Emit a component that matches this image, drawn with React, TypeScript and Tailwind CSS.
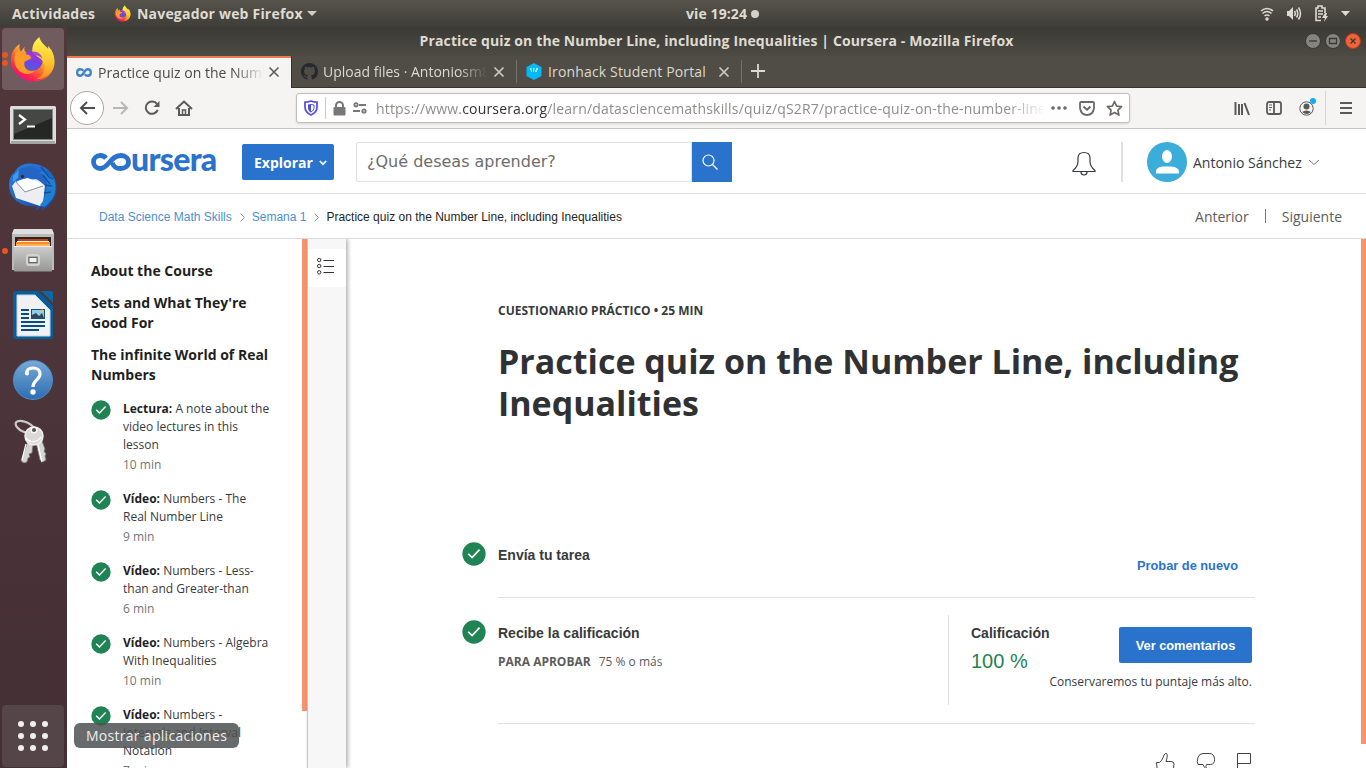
import React from "react";

const lessons = [
  { kind: "Lectura:", lines: ["A note about the", "video lectures in this", "lesson"], time: "10 min" },
  { kind: "Vídeo:", lines: ["Numbers - The", "Real Number Line"], time: "9 min" },
  { kind: "Vídeo:", lines: ["Numbers - Less-", "than and Greater-than"], time: "6 min" },
  { kind: "Vídeo:", lines: ["Numbers - Algebra", "With Inequalities"], time: "10 min" },
  { kind: "Vídeo:", lines: ["Numbers -", "Intervals and Interval", "Notation"], time: "7 min" },
];

function Firefox({ size, id }: { size: number; id: string }) {
  return (
    <svg width={size} height={size} viewBox="0 0 48 48" className="shrink-0">
      <defs>
        <linearGradient id={id + "a"} x1="0.85" y1="0.1" x2="0.2" y2="0.95">
          <stop offset="0" stopColor="#fff44f" />
          <stop offset="0.35" stopColor="#ffb02a" />
          <stop offset="0.62" stopColor="#ff5b36" />
          <stop offset="0.85" stopColor="#fb1d5a" />
          <stop offset="1" stopColor="#e31587" />
        </linearGradient>
        <linearGradient id={id + "b"} x1="0.7" y1="0" x2="0.3" y2="1">
          <stop offset="0" stopColor="#a92fe0" />
          <stop offset="0.5" stopColor="#7542e5" />
          <stop offset="1" stopColor="#4a5fd8" />
        </linearGradient>
        <linearGradient id={id + "c"} x1="0.6" y1="0" x2="0.6" y2="1">
          <stop offset="0" stopColor="#fff44f" />
          <stop offset="0.6" stopColor="#ffc62e" />
          <stop offset="1" stopColor="#ff8a1f" />
        </linearGradient>
      </defs>
      <path fill={`url(#${id}a)`} d="M11 8c-1 4 0 6 1 8l4-5c-1 3 0 5 2 6 7-4 16-2 20 2l5-5c5 9 5 19-2 26-8 8-23 9-32 0C1 32 0 22 5 14c2-3 4-4 6-6z" />
      <circle cx="24" cy="25" r="10.5" fill={`url(#${id}b)`} />
      <path fill={`url(#${id}c)`} d="M31 1c1 5 5 8 9 12v-3c7 8 8 19 3 26-4 6-10 8-15 8 6-3 9-8 8-14-1-8-9-9-12-13-1-7 2-12 7-16z" />
      <path fill="#ff9b26" d="M7 17c5-3 9-1 11 2l6 1c0 3-5 5-8 6-2 7 4 12 11 9-5 6-16 5-20-4-2-5-2-10 0-14z" />
      <path fill="#9635df" d="M20 17c6-3 13 0 14 6-3-3-6-3-8-3 2 3 2 5 0 7-1-4-6-6-6-10z" opacity=".85" />
    </svg>
  );
}

function Terminal() {
  return (
    <svg width="46" height="38" viewBox="0 0 46 38">
      <rect x="0" y="0" width="46" height="38" rx="1.5" fill="#dcdedb" />
      <rect x="1" y="35" width="44" height="3" fill="#a5a6a4" />
      <rect x="3" y="3" width="40" height="31" fill="#858784" />
      <rect x="4" y="4" width="38" height="29" fill="#252725" />
      <path d="M4 4h38v8L4 28z" fill="#444744" />
      <path d="M9 9l6 4.500-6 4.500" fill="none" stroke="#fff" strokeWidth="2.200" />
      <path d="M17 20.500h8" stroke="#fff" strokeWidth="2" />
    </svg>
  );
}

function Thunderbird() {
  return (
    <svg width="48" height="48" viewBox="0 0 48 48">
      <defs>
        <linearGradient id="tb" x1="0" y1="0" x2="1" y2="1">
          <stop offset="0" stopColor="#2a7de0" />
          <stop offset="0.5" stopColor="#2168c9" />
          <stop offset="1" stopColor="#173f96" />
        </linearGradient>
      </defs>
      <path d="M16 1c13-2 25 4 30 15 4 13-1 23-9 29l-4 2-1-3-5 3 1-4C13 45 0 36 0 22c0-6 2-10 6-13 1-4 6-7 10-8z" fill="url(#tb)" />
      <path d="M3 23l4-5 21-2 8 6-2 19-3 2-24-8z" fill="#eceef2" />
      <path d="M6 18l13-3 16 7-19 7z" fill="#fff" />
      <path d="M6 18l10 11 18-6" fill="none" stroke="#8f939e" strokeWidth="1" />
      <path d="M10 7c4-3 12-5 16-2 8 3 11 11 10 18-6-7-9-7-14-8-6-1-9 1-15 4-1-5 0-9 3-12z" fill="#2464c2" />
      <path d="M30 9c7 3 10 12 6 22-1 6-3 9-5 11l4 2c10-6 15-18 9-29l-8-6z" fill="#1f7fd0" />
      <path d="M32 4l8 10 4 2M34 12l7 9M36 22l7 1M35 30l7-1" stroke="#174c9d" fill="none" strokeWidth="1.300" />
      <path d="M4 13l6-6-1 8-5 4z" fill="#3f99ed" />
      <circle cx="13.500" cy="13.500" r="1.700" fill="#3a2a2c" />
    </svg>
  );
}

function Files() {
  return (
    <svg width="42" height="43" viewBox="0 0 42 43">
      <defs>
        <linearGradient id="fg" x1="0" y1="0" x2="0" y2="1"><stop offset="0" stopColor="#cdcdcb" /><stop offset="1" stopColor="#979795" /></linearGradient>
      </defs>
      <path d="M2 0h38l2 5v36H0V5z" fill="#bbbbb9" />
      <path d="M2 0h38l2 5H0z" fill="#dededc" />
      <rect x="3" y="8" width="36" height="11" fill="#292625" />
      <path d="M6 10h30v7H6z" fill="#bd4316" />
      <path d="M5 12h32v5H5z" fill="#fff0d8" />
      <path d="M4 13h34v6H4z" fill="#f58b2c" />
      <path d="M4 15h34v3H4z" fill="#ffb257" />
      <rect x="2" y="17" width="38" height="25.500" rx="1" fill="url(#fg)" />
      <path d="M2 17.500h38" stroke="#eee" />
      <rect x="15" y="26" width="12" height="10" rx="2" fill="#aaa" stroke="#d3d3d1" strokeWidth="2" />
      <rect x="17" y="28.500" width="8" height="5" fill="#f3f3f2" stroke="#666" />
    </svg>
  );
}

function Writer() {
  return (
    <svg width="40" height="48" viewBox="0 0 40 48">
      <path d="M3 0h22l15 15v30q0 3-3 3H3q-3 0-3-3V3q0-3 3-3z" fill="#065e9b" />
      <path d="M28 0h10q2 0 2 2v10z" fill="#0b69a6" />
      <path d="M4 4h18l15 15v26H4z" fill="#f1f1f1" stroke="#c7d4de" strokeWidth="1" />
      <path d="M8 19h8M8 23h8M8 27h8M8 31h24M8 35h24M8 39h18" stroke="#084f7f" strokeWidth="2" />
      <rect x="18" y="18" width="14" height="10" fill="#085684" />
      <rect x="19" y="19" width="12" height="8" fill="#92cbee" />
      <path d="M19 24l4-2 3 3 3-3 2 5H19z" fill="#37474d" />
      <circle cx="29" cy="20" r="1.500" fill="#ecc64c" />
    </svg>
  );
}

function Help() {
  return (
    <svg width="42" height="42" viewBox="0 0 42 42">
      <defs><linearGradient id="hp" x1="0" y1="0" x2="0" y2="1"><stop offset="0" stopColor="#78a9da" /><stop offset="1" stopColor="#2c6eb0" /></linearGradient></defs>
      <circle cx="21" cy="21" r="19.500" fill="url(#hp)" stroke="#4e8cc8" />
      <path d="M14.500 15c0-4.500 3-6 6.500-6 4 0 7 2 7 6 0 6-7 6-7 13" fill="none" stroke="#fff" strokeWidth="3.200" />
      <circle cx="15" cy="14.500" r="2" fill="#fff" />
      <circle cx="21" cy="33" r="2.700" fill="#fff" />
    </svg>
  );
}

function Keys() {
  return (
    <svg width="34" height="46" viewBox="0 0 34 46">
      <ellipse cx="11" cy="8" rx="10" ry="5" transform="rotate(25 11 8)" fill="none" stroke="#c9c9c7" strokeWidth="2.200" />
      <path d="M14 22l-7 20 3 2 3-1 1-4 2-1-1-3 3-1 1-9 3-2 4 18 3 2 3-2-1-4 1-2-2-3 1-2-4-11z" fill="#d5d5d2" stroke="#777674" strokeWidth=".8" />
      <circle cx="20" cy="17" r="9" fill="#d9d9d6" stroke="#efefec" strokeWidth="1.500" />
      <circle cx="20" cy="11" r="2.800" fill="#585152" stroke="#f7f7f5" strokeWidth="1.500" />
      <path d="M12 19c4 5 11 5 15-1M12 25l-4 16M24 26l4 17" fill="none" stroke="#fff" strokeWidth="1.300" />
    </svg>
  );
}

function LoopMark({ w, h, color }: { w: number; h: number; color: string }) {
  return (
    <svg width={w} height={h} viewBox="0 0 35 18" preserveAspectRatio="none" className="shrink-0">
      <path d="M16 5.500C14 3 12 2.500 9.300 2.500 5.100 2.500 2.500 5.300 2.500 9s2.600 6.500 6.800 6.500c8 0 8-13 16.200-13 4.200 0 7 2.800 7 6.500s-2.800 6.500-7 6.500c-2.500 0-4.700-1-6.300-2.900" fill="none" stroke={color} strokeWidth="5" />
    </svg>
  );
}

function WordmarkLoop() {
  return (
    <svg width="40" height="18" viewBox="0 0 40 18" className="shrink-0">
      <path d="M15 5.200C13.500 3.200 11.500 2.500 9.300 2.500 5.300 2.500 2.500 5.300 2.500 9s2.800 6.500 6.800 6.500C17.500 15.500 19.500 2.500 29.500 2.500c4.500 0 8 2.700 8 6.500s-3.500 6.500-8 6.500c-4 0-7.500-2.200-8-6" fill="none" stroke="#2a73cc" strokeWidth="4.800" />
    </svg>
  );
}

function Check({ size }: { size: number }) {
  return (
    <svg width={size} height={size} viewBox="0 0 20 20" className="shrink-0">
      <circle cx="10" cy="10" r="9.700" fill="#1f8354" />
      <path d="M5.200 9.800l3.200 3.200 6.200-6.600" fill="none" stroke="#fff" strokeWidth="1.400" />
    </svg>
  );
}

function Cross({ light = false }: { light?: boolean }) {
  return (
    <svg width="12" height="12" viewBox="0 0 12 12" className="shrink-0">
      <path d="M1.500 1.500l9 9M10.500 1.500l-9 9" stroke={light ? "#cfcdc7" : "#5c5c5a"} strokeWidth="1.600" />
    </svg>
  );
}

function TopBar() {
  return (
    <div className="flex h-[27px] shrink-0 items-center bg-gradient-to-b from-[#57544b] to-[#3e3d38] text-[14px] font-bold text-[#dfdbd2]">
      <div className="ml-3 w-[102px] whitespace-nowrap tracking-[0.2px]">Actividades</div>
      <Firefox size={17} id="fs" />
      <div className="ml-[6px] w-[168px] whitespace-nowrap tracking-[0.2px]">Navegador web Firefox</div>
      <svg width="10" height="6" viewBox="0 0 10 6" className="ml-[2px]"><path d="M0 0h10L5 5z" fill="#cfcdc7" /></svg>
      <div className="ml-[369px] w-[62px] whitespace-nowrap text-[14px] tracking-[0.1px]">vie 19:24</div>
      <div className="ml-[3px] size-2 rounded-full bg-[#d2d0ca]" />
      <div className="ml-auto mr-[16px] flex items-center gap-[12px]">
        <svg width="14" height="14" viewBox="0 0 14 14" fill="none" stroke="#dfdbd2" strokeWidth="1.500"><path d="M1 4q6-5 12 0M2.500 6.500q4.500-4 9 0M4.500 9q2.500-2 5 0" /><circle cx="7" cy="12" r="1" fill="#dfdbd2" /></svg>
        <svg width="16" height="15" viewBox="0 0 16 15" fill="none" stroke="#dfdbd2" strokeWidth="1.500"><path d="M1 5h2l4-4v13l-4-4H1z" fill="#dfdbd2" stroke="none" /><path d="M8.500 5q1.500 2.500 0 5M10.500 3.500q2.500 4 0 8M12.500 1.500q4 6 0 12" /></svg>
        <svg width="15" height="17" viewBox="0 0 15 17" fill="none" stroke="#dfdbd2" strokeWidth="1.600"><path d="M7 15.500H2V3h2V1h4v2h3v5M4 6h5M4 9h5M4 12h3" /><path d="M11 8l-3 5h3l-1 4 4-6h-2l1-3z" fill="#dfdbd2" stroke="none" /></svg>
        <svg width="9" height="6" viewBox="0 0 9 6"><path d="M0 0h9L4.500 5z" fill="#dfdbd2" /></svg>
      </div>
    </div>
  );
}

function Dock() {
  return (
    <div className="flex w-[67px] shrink-0 flex-col items-center bg-gradient-to-b from-[#51373b] via-[#4b343a] to-[#432f34] pt-px pr-[2px]">
      <div className="relative flex h-[62px] w-[62px] shrink-0 items-center justify-center rounded-[4px] bg-[#705b5e]">
        <Firefox size={47} id="fl" />
        <i className="absolute top-[24px] left-0 size-[6px] rounded-full bg-[#e95420]" />
        <i className="absolute top-[32px] left-0 size-[6px] rounded-full bg-[#e95420]" />
      </div>
      <div className="mt-4"><Terminal /></div>
      <div className="mt-[19px]"><Thunderbird /></div>
      <div className="relative mt-[18px] flex w-[62px] justify-center">
        <Files />
        <i className="absolute top-[19px] left-0 size-[6px] rounded-full bg-[#e95420]" />
      </div>
      <div className="mt-[19px]"><Writer /></div>
      <div className="mt-[20px]"><Help /></div>
      <div className="mt-[18px] mr-[4px]"><Keys /></div>
      <div className="mt-auto mb-px grid h-[62px] w-[62px] shrink-0 grid-cols-3 place-content-center gap-[6px] rounded-[4px] bg-[#544548] pl-[16px] pr-[16px]">
        {Array.from({ length: 9 }, (_, i) => <i key={i} className="size-[6px] rounded-full bg-[#f2f0ef]" />)}
      </div>
    </div>
  );
}

function WindowChrome() {
  return (
    <>
      <div className="flex h-[29px] shrink-0 items-center bg-gradient-to-b from-[#3b3a36] to-[#4c4a43] text-[14px] font-bold text-[#dfdbd2]">
        <div className="w-[61px]" />
        <div className="flex-1 pb-[2px] text-center tracking-[0.12px] whitespace-nowrap">Practice quiz on the Number Line, including Inequalities | Coursera - Mozilla Firefox</div>
        <div className="mr-[5px] mb-[2px] flex gap-[4px]">
          {["M4 8h8", "M4.500 5.500h7v5h-7z", "M5.500 5.500l5 5m0-5l-5 5"].map((d, i) => (
            <svg key={d} width="16" height="16" viewBox="0 0 16 16"><circle cx="8" cy="8" r="7.500" fill={i === 2 ? "#ef6338" : "#86847e"} stroke={i === 2 ? "#b63d18" : "#393834"} /><path d={d} fill="none" stroke="#3a3935" strokeWidth="1.300" /></svg>
          ))}
        </div>
      </div>
      <div className="flex h-8 shrink-0 border-b border-[#33322e] bg-[#504d46] text-[14px] text-[#dcd9d1]">
        <div className="flex h-8 w-[224px] shrink-0 items-center border-t-2 border-[#f0784f] bg-[#f5f4f2] pb-[2px] pl-[9px] text-[#4b4b4a]">
          <LoopMark w={16} h={9} color="#3f83cb" />
          <div className="ml-[6px] w-[166px] overflow-hidden whitespace-nowrap [mask-image:linear-gradient(to_right,#000_82%,transparent)]">Practice quiz on the Number Line</div>
          <div className="ml-[4px]"><Cross /></div>
        </div>
        <div className="flex w-[225px] shrink-0 items-center border-l border-[#33322e] pl-[9px]">
          <svg width="17" height="17" viewBox="0 0 16 16" className="shrink-0"><path fill="#24292e" d="M8 0C3.580 0 0 3.580 0 8c0 3.540 2.290 6.530 5.470 7.590.4.070.55-.17.55-.38v-1.490c-2.010.37-2.530-.49-2.690-.94-.09-.23-.48-.94-.82-1.130-.28-.15-.68-.52-.01-.53.63-.01 1.080.58 1.230.82.72 1.210 1.870.87 2.330.66.07-.52.28-.87.51-1.070-1.780-.2-3.640-.89-3.640-3.950 0-.87.31-1.590.82-2.150-.08-.2-.36-1.020.08-2.120 0 0 .67-.21 2.200.82a7.500 7.500 0 0 1 4 0c1.530-1.040 2.200-.82 2.200-.82.44 1.100.16 1.920.08 2.120.51.56.82 1.270.82 2.150 0 3.070-1.870 3.750-3.650 3.950.29.25.54.73.54 1.480v2.200c0 .21.150.46.55.38A8 8 0 0 0 16 8c0-4.420-3.580-8-8-8z" /></svg>
          <div className="ml-[5px] w-[164px] overflow-hidden whitespace-nowrap [mask-image:linear-gradient(to_right,#000_82%,transparent)]">Upload files · Antoniosm8</div>
          <div className="ml-[6px]"><Cross light /></div>
        </div>
        <div className="my-[4px] flex w-[226px] shrink-0 items-center border-x border-[#76736c] pl-[9px]">
          <svg width="16" height="17" viewBox="0 0 16 17" className="shrink-0"><path d="M8 0l7.500 4v9L8 17 .5 13V4z" fill="#04b9f5" /><path d="M4 6h1.500M7 6h1.500M10 6h2M5 8h1M7 8h1M9 8h2" stroke="#d5f4ff" strokeWidth="1.500" /></svg>
          <div className="ml-[6px] w-[168px] whitespace-nowrap tracking-[0.15px]">Ironhack Student Portal</div>
          <div className="ml-[2px]"><Cross light /></div>
        </div>
        <svg width="14" height="14" viewBox="0 0 14 14" className="mt-[8px] ml-[9px]"><path d="M7 0v14M0 7h14" stroke="#dcd9d1" strokeWidth="1.800" /></svg>
      </div>
      <div className="flex h-[41px] shrink-0 items-center border-b border-[#c9c7c4] bg-[#f5f4f2]">
        <div className="ml-[3px] flex size-[34px] items-center justify-center rounded-full border border-[#aaa9a6] bg-white">
          <svg width="17" height="14" viewBox="0 0 17 14" fill="none" stroke="#4f4f4e" strokeWidth="2"><path d="M8 1L2 7l6 6M2 7h14" /></svg>
        </div>
        <svg width="17" height="14" viewBox="0 0 17 14" fill="none" stroke="#b7b6b4" strokeWidth="2" className="ml-[8px]"><path d="M9 1l6 6-6 6M15 7H1" /></svg>
        <svg width="16" height="16" viewBox="0 0 16 16" fill="none" stroke="#5a5a59" strokeWidth="2" className="ml-[15px]"><path d="M13.700 10A6.200 6.200 0 1 1 13 4" /><path d="M15.500 1v6h-6z" fill="#5a5a59" stroke="none" /></svg>
        <svg width="18" height="17" viewBox="0 0 18 17" fill="none" stroke="#5a5a59" strokeWidth="2" className="ml-[15px]"><path d="M1 9l8-7.500L17 9M4 8v7h10V8" /><path d="M7.500 15v-5h3v5" strokeWidth="1.500" /></svg>
        <div className="ml-[103px] flex h-[30px] w-[834px] items-center rounded-[3px] border border-[#c1bfbc] bg-white shadow-sm">
          <svg width="14" height="16" viewBox="0 0 14 16" className="ml-[7px] shrink-0"><path d="M7 1c2 1 4 1.200 6 1.200V7c0 4-2.500 6.500-6 8-3.500-1.500-6-4-6-8V2.200C3 2.200 5 2 7 1z" fill="none" stroke="#6150e5" strokeWidth="1.800" /><path d="M7 4v8.500C4.500 11.500 4 9.500 4 7V4.500z" fill="#4751d2" /><path d="M7 4.500l3 .5v2c0 2.500-1 4-3 5" fill="none" stroke="#4751d2" strokeWidth="1" /></svg>
          <i className="ml-[7px] h-[22px] w-px bg-[#cecdca]" />
          <svg width="13" height="15" viewBox="0 0 13 15" className="ml-[7px] shrink-0"><rect x=".5" y="6" width="12" height="8.500" rx="1" fill="#777" /><path d="M3 7V4.500a3.500 3.500 0 0 1 7 0V7" fill="none" stroke="#777" strokeWidth="2" /></svg>
          <svg width="16" height="12" viewBox="0 0 16 12" fill="none" stroke="#777" strokeWidth="1.800" className="ml-[6px] shrink-0"><circle cx="4" cy="2.800" r="1.700" /><path d="M7 3h7M1 9h7" /><circle cx="12" cy="9" r="1.700" /></svg>
          <div className="ml-[8px] w-[670px] overflow-hidden text-[14px] tracking-[0.18px] whitespace-nowrap text-[#8d8d8c] [mask-image:linear-gradient(to_right,#000_94%,transparent)]">https://www.<span className="text-[#333]">coursera.org</span>/learn/datasciencemathskills/quiz/qS2R7/practice-quiz-on-the-number-line</div>
          <svg width="16" height="4" viewBox="0 0 16 4" className="ml-[5px] shrink-0" fill="#686867"><circle cx="2" cy="2" r="1.800" /><circle cx="8" cy="2" r="1.800" /><circle cx="14" cy="2" r="1.800" /></svg>
          <svg width="16" height="15" viewBox="0 0 16 15" fill="none" stroke="#6b6b6a" strokeWidth="1.800" className="ml-[12px] shrink-0"><path d="M2 1h12q1 0 1 1v5q-1 7-7 7T1 7V2q0-1 1-1z" /><path d="M4.500 5.500L8 8.700l3.500-3.200" strokeWidth="2" /></svg>
          <svg width="17" height="17" viewBox="0 0 17 17" fill="none" stroke="#6b6b6a" strokeWidth="1.700" className="ml-[11px] shrink-0"><path d="M8.500 1.500l2.100 4.600 5 .6-3.700 3.400 1 5-4.400-2.500-4.400 2.500 1-5-3.700-3.400 5-.6z" strokeLinejoin="round" /></svg>
        </div>
        <svg width="16" height="15" viewBox="0 0 16 15" stroke="#5a5a59" strokeWidth="2" className="ml-[104px]"><path d="M1.500 1v13M5 3v11M8 3v11M10.500 2L15 14" fill="none" /></svg>
        <svg width="16" height="14" viewBox="0 0 16 14" fill="none" stroke="#5a5a59" strokeWidth="1.800" className="ml-[16px]"><rect x="1" y="1" width="14" height="12" rx="2" /><path d="M8 1v12" /><path d="M3 4h3M3 6.500h3M3 9h2" strokeWidth="1" /></svg>
        <div className="relative ml-[17px]"><svg width="15" height="15" viewBox="0 0 15 15"><circle cx="7.500" cy="7.500" r="6.700" fill="none" stroke="#5a5a59" /><circle cx="7.500" cy="5.500" r="3" fill="#5a5a59" /><path d="M3 11q4.500-3 9 0-4 4-9 0z" fill="#5a5a59" /></svg><i className="absolute -top-[3px] left-[11px] size-[6px] rounded-full bg-[#16aaf5]" /></div>
        <i className="ml-[11px] h-[34px] w-px bg-[#d6d4d1]" />
        <svg width="12" height="12" viewBox="0 0 12 12" className="ml-[14px]"><path d="M0 1h12M0 6h12M0 11h12" stroke="#5a5a59" strokeWidth="1.800" /></svg>
      </div>
    </>
  );
}

function SiteHeader() {
  return (
    <>
      <header className="flex h-[65px] shrink-0 items-center border-b border-[#e1e1e1] bg-white pt-[2px]">
        <div className="ml-6 flex h-[18px] w-[128px] items-center text-[#2a73cc]">
          <WordmarkLoop />
          <span className="mt-[-7px] font-['Lato'] text-[32px] leading-[24px] font-black tracking-[-0.7px]">ursera</span>
        </div>
        <button className="ml-[23px] flex h-9 w-[92px] items-center rounded-[2px] bg-[#2a73cc] pl-3 text-[14px] font-bold text-white">Explorar
          <svg width="8" height="6" viewBox="0 0 8 6" className="mt-[2px] ml-[6px]"><path d="M.8 1L4 4.200 7.200 1" fill="none" stroke="#fff" strokeWidth="1.700" /></svg>
        </button>
        <div className="ml-[22px] flex h-10 w-[336px] items-center rounded-l-[2px] border border-[#e1e1e1] pl-[10px] font-['DejaVu_Sans'] text-[16px] text-[#6d6d6d]">¿Qué deseas aprender?</div>
        <div className="flex h-10 w-10 items-center justify-center bg-[#2a73cc]"><svg width="18" height="18" viewBox="0 0 18 18" fill="none" stroke="#fff" strokeWidth="1.200" className="mr-[4px]"><circle cx="7.500" cy="7.500" r="5.500" /><path d="M11.500 11.500l5 5" /></svg></div>
        <svg width="24" height="26" viewBox="0 0 24 26" fill="none" stroke="#373a3c" strokeWidth="1.200" className="mt-[3px] ml-[340px]"><path d="M1 20.500v-1c3-2.500 5-5 5-9V7c0-3.500 2.500-5.500 6-5.500S18 3.500 18 7v3.500c0 4 2 6.500 5 9v1zM9 21c0 4 6 4 6 0" /></svg>
        <i className="ml-[25px] h-10 w-[2px] bg-[#e1e1e1]" />
        <svg width="40" height="40" viewBox="0 0 40 40" className="ml-6"><circle cx="20" cy="20" r="20" fill="#3badda" /><ellipse cx="20" cy="14.500" rx="5" ry="6.500" fill="#fff" /><path d="M9 31.500v-2c0-4 5-5 8-5h6c3 0 9 1 9 5v2z" fill="#fff" /></svg>
        <span className="ml-[6px] text-[14px] whitespace-nowrap text-[#373a3c]">Antonio Sánchez</span>
        <svg width="12" height="7" viewBox="0 0 12 7" className="mt-px ml-[6px]"><path d="M1 1l5 4.500L11 1" fill="none" stroke="#777" /></svg>
      </header>
      <nav className="flex h-[45px] shrink-0 items-center border-b border-[#dcdcdc] bg-white pl-8 font-['Liberation_Sans'] text-[12px] text-[#4a90cd]">
        <span className="pt-[2px]">Data Science Math Skills</span>
        <svg width="5" height="9" viewBox="0 0 5 9" className="mt-[3px] mr-[7px] ml-[8px]"><path d="M.5.5l4 4-4 4" fill="none" stroke="#999" /></svg>
        <span className="pt-[2px]">Semana 1</span>
        <svg width="5" height="9" viewBox="0 0 5 9" className="mt-[3px] mr-[7px] ml-[8px]"><path d="M.5.5l4 4-4 4" fill="none" stroke="#999" /></svg>
        <span className="pt-[2px] text-[#1f1f1f]">Practice quiz on the Number Line, including Inequalities</span>
        <div className="mr-6 ml-auto flex items-center font-['Open_Sans'] text-[14px] text-[#5c5c5c]"><span>Anterior</span><i className="mr-[16px] ml-[16px] h-[14px] w-px bg-[#777]" /><span>Siguiente</span></div>
      </nav>
    </>
  );
}

function Course() {
  return (
    <main className="flex min-h-0 flex-1 overflow-hidden bg-white">
      <aside className="h-full w-[235px] shrink-0 overflow-hidden pt-[22px] pl-6 text-[#1f1f1f]">
        <div className="space-y-3 text-[14px] leading-5 font-bold">
          <div>About the Course</div><div>Sets and What They're<br />Good For</div><div>The infinite World of Real<br />Numbers</div>
        </div>
        <div className="mt-[15px] space-y-4 text-[12px] leading-[18px] text-[#373a3c]">
          {lessons.map((l) => (
            <div key={l.lines[1]} className="flex">
              <div className="mr-3 h-5"><Check size={20} /></div>
              <div className="whitespace-nowrap"><b className="text-[#1f1f1f]">{l.kind}</b>{" "}{l.lines.map((s, i) => <React.Fragment key={s}>{i > 0 && <br />}{s}</React.Fragment>)}<div className="pt-[2px] text-[#757575]">{l.time}</div></div>
            </div>
          ))}
        </div>
      </aside>
      <i className="h-[472px] w-[5px] shrink-0 bg-[#f6936d]" />
      <div className="z-10 w-[39px] shrink-0 border-l border-[#c5c5c5] bg-[#f7f7f7] pt-[10px] shadow-[2px_0_4px_rgba(0,0,0,0.3)]">
        <div className="flex h-[38px] bg-white pt-[8px] pl-[9px]"><svg width="18" height="18" viewBox="0 0 18 18" fill="none" stroke="#333"><circle cx="2.200" cy="3" r="1.700" /><circle cx="2.200" cy="9" r="1.700" /><circle cx="2.200" cy="15.300" r="1.700" /><path d="M6.500 3.500H17M6.500 9.500H17M6.500 15.500H17" /></svg></div>
      </div>
      <section className="min-w-0 flex-1 pt-[62px] pl-[116px] text-[#373a3c]">
        <div className="ml-[36px] text-[12px] leading-5 font-bold">CUESTIONARIO PRÁCTICO • 25 MIN</div>
        <h1 className="mt-[19px] ml-[36px] text-[34px] leading-[42px] font-bold whitespace-nowrap text-[#2f3133]">Practice quiz on the Number Line, including<br />Inequalities</h1>
        <div className="mt-[112px] flex h-[62px] w-[793px]">
          <div className="mt-[6px] mr-3"><Check size={24} /></div>
          <div className="flex flex-1 justify-between border-b border-[#e1e1e1] pr-[17px] font-['Liberation_Sans'] font-bold"><span className="mt-[9px] text-[14px]">Envía tu tarea</span><span className="mt-[20px] text-[12.8px] text-[#2a73cc]">Probar de nuevo</span></div>
        </div>
        <div className="flex h-[126px] w-[793px]">
          <div className="mt-[22px] mr-3"><Check size={24} /></div>
          <div className="flex flex-1 border-b border-[#e1e1e1] pt-[17px]">
            <div className="w-[450px] pt-[8px]"><div className="font-['Liberation_Sans'] text-[14px] leading-5 font-bold">Recibe la calificación</div><div className="mt-[10px] text-[12px] leading-[18px] text-[#5c5c5c]"><b>PARA APROBAR</b><span className="ml-2">75 % o más</span></div></div>
            <div className="flex h-[90px] flex-1 flex-col border-l border-[#e1e1e1] pr-[3px] pl-[22px]">
              <div className="flex justify-between"><div className="pt-[8px] font-['Liberation_Sans']"><div className="text-[14px] leading-5 font-bold">Calificación</div><div className="mt-[6px] text-[20px] leading-6 text-[#1f8354]">100 %</div></div><button className="mt-[12px] h-9 w-[133px] rounded-[2px] bg-[#2a73cc] pt-[2px] font-['Liberation_Sans'] text-[12.8px] font-bold text-white">Ver comentarios</button></div>
              <div className="text-right text-[12px] leading-[18px]">Conservaremos tu puntaje más alto.</div>
            </div>
          </div>
        </div>
        <div className="mt-[29px] flex w-[793px] justify-end gap-[21px] pr-[4px]">
          <svg width="20" height="20" viewBox="0 0 20 20" fill="none" stroke="#444"><path d="M5 20l-1-1H2.500L1.500 9.500H4.500C7 7.500 8 5 9 2q1-2 2.500-1.500c1.500 1 .5 5-.5 8h5q3 0 3 2.500l-1 9" /></svg>
          <svg width="20" height="20" viewBox="0 0 20 20" fill="none" stroke="#444"><path d="M11 20c0-3-2-5-3-6.500l-1-2H2q-1.500-2 0-7Q3 .5 7 .5h6q5.500 0 5.500 6 0 5-4 5h-4q-1.500 1.500 0 4l1 4.500" /></svg>
          <svg width="14" height="20" viewBox="0 0 14 20" fill="none" stroke="#444"><path d="M.5 20V.5h13v10H.5" /></svg>
        </div>
      </section>
      <i className="h-[505px] w-[5px] shrink-0 bg-[#f6936d]" />
    </main>
  );
}

export default function App() {
  return (
    <div className="relative flex h-screen w-full flex-col overflow-hidden font-['Open_Sans','Noto_Sans',sans-serif]">
      <TopBar />
      <div className="flex min-h-0 flex-1">
        <Dock />
        <div className="flex min-w-0 flex-1 flex-col"><WindowChrome /><SiteHeader /><Course /></div>
      </div>
      <div className="absolute top-[723px] left-[74px] z-20 flex h-[25px] w-[165px] items-center justify-center rounded-[6px] bg-[#4d5151]/85 text-[14px] tracking-[0.3px] whitespace-nowrap text-[#eeeeec]">Mostrar aplicaciones</div>
    </div>
  );
}
